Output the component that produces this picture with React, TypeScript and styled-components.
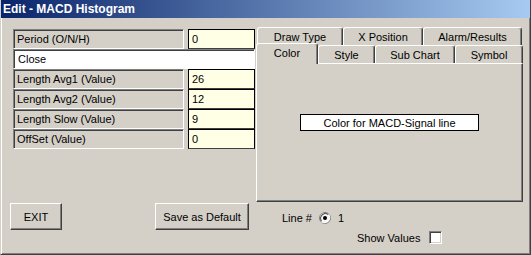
import styled, { createGlobalStyle } from 'styled-components';

const GlobalStyle = createGlobalStyle`
  body {
    margin: 0;
    font-family: 'Liberation Sans', Arial, sans-serif;
    font-size: 11px;
    color: #000;
  }
`;

const Window = styled.div`
  width: 531px;
  height: 255px;
  box-sizing: border-box;
  background: #d4d0c8;
  display: flex;
  flex-direction: column;
  border-left: 1px solid #d4d0c8;
  border-right: 1px solid #404040;
  border-bottom: 1px solid #404040;
  box-shadow: inset 1px 0 #fff, inset -1px -1px #808080;
  overflow: hidden;
`;

const TitleBar = styled.div`
  height: 18px;
  flex: none;
  display: flex;
  align-items: center;
  padding-left: 2px;
  background: linear-gradient(to right, #0a246a, #a6caf0);
  color: #fff;
  font-weight: bold;
  font-size: 12px;
`;

const Body = styled.div`
  display: flex;
  padding: 9px 0 0 9px;
`;

const LeftColumn = styled.div`
  width: 246px;
  display: flex;
  flex-direction: column;
`;

const ParamTable = styled.div`
  margin: 2px 0 0 3px;
  width: 242px;
  display: flex;
  flex-direction: column;
`;

const ParamRow = styled.div`
  height: 20px;
  display: flex;
  justify-content: space-between;
`;

const ParamLabel = styled.div`
  width: 171px;
  box-sizing: border-box;
  border: 1px solid;
  border-color: #808080 #fff #fff #808080;
  box-shadow: inset 1px 1px #404040;
  padding: 0 0 0 3px;
  display: flex;
  align-items: center;
`;

const ParamValue = styled.div`
  width: 67px;
  box-sizing: border-box;
  background: #ffffe6;
  border: 1px solid #000;
  border-bottom-color: #404040;
  padding-left: 3px;
  display: flex;
  align-items: center;
`;

const SelectField = styled.div`
  height: 20px;
  box-sizing: border-box;
  background: #fff;
  border: 1px solid;
  border-color: #808080 #fff #fff #808080;
  box-shadow: inset 1px 1px #404040;
  padding-left: 4px;
  display: flex;
  align-items: center;
`;

const ButtonRow = styled.div`
  margin-top: 54px;
  padding-right: 7px;
  display: flex;
  justify-content: space-between;
`;

const Button = styled.div<{ $w: number }>`
  width: ${(p) => p.$w}px;
  height: 27px;
  box-sizing: border-box;
  border: 1px solid;
  border-color: #fff #404040 #404040 #fff;
  box-shadow: inset -1px -1px #808080;
  display: flex;
  align-items: center;
  justify-content: center;
`;

const RightColumn = styled.div`
  width: 267px;
  display: flex;
  flex-direction: column;
`;

const TabRow = styled.div<{ $inset?: number }>`
  display: flex;
  align-items: flex-end;
  height: 18px;
  padding-left: ${(p) => p.$inset ?? 0}px;
`;

const Tab = styled.div<{ $w: number; $active?: boolean }>`
  width: ${(p) => p.$w}px;
  height: ${(p) => (p.$active ? 21 : 18)}px;
  margin-bottom: ${(p) => (p.$active ? -1 : 0)}px;
  box-sizing: border-box;
  background: #d4d0c8;
  border-top: 1px solid #fff;
  border-left: 1px solid #fff;
  border-right: 1px solid #404040;
  box-shadow: inset -1px 0 #808080;
  border-radius: 3px 3px 0 0;
  position: ${(p) => (p.$active ? 'relative' : 'static')};
  z-index: ${(p) => (p.$active ? 1 : 0)};
  display: flex;
  align-items: ${(p) => (p.$active ? 'flex-start' : 'center')};
  padding-top: ${(p) => (p.$active ? 3 : 0)}px;
  justify-content: center;
`;

const TabPanel = styled.div`
  height: 139px;
  box-sizing: border-box;
  border: 1px solid;
  border-color: #fff #404040 #404040 #fff;
  box-shadow: inset -1px -1px #808080;
  display: flex;
  justify-content: center;
  padding-top: 50px;
`;

const CaptionBox = styled.div`
  width: 179px;
  height: 17px;
  box-sizing: border-box;
  background: #fff;
  border: 1px solid #000;
  display: flex;
  align-items: center;
  justify-content: center;
`;

const OptionRow = styled.div<{ $indent: number; $top: number }>`
  display: flex;
  align-items: center;
  gap: 7px;
  height: 13px;
  margin-top: ${(p) => p.$top}px;
  padding-left: ${(p) => p.$indent}px;
`;

const CheckBox = styled.div`
  width: 13px;
  height: 13px;
  box-sizing: border-box;
  background: #fff;
  border: 1px solid;
  border-color: #808080 #fff #fff #808080;
  box-shadow: inset 1px 1px #404040, inset -1px -1px #d4d0c8;
  margin-left: 2px;
`;

const Radio = () => (
  <svg width="12" height="12" viewBox="0 0 12 12">
    <circle cx="6" cy="6" r="5.5" fill="#f4f4f4" stroke="#808080" />
    <path d="M2.5 9.5 A5 5 0 0 1 9.5 2.5" fill="none" stroke="#404040" />
    <path d="M9.8 2.2 A5.5 5.5 0 0 1 2.2 9.8" fill="none" stroke="#fff" />
    <circle cx="6" cy="6" r="2" fill="#000" />
  </svg>
);

const params = [
  { label: 'Length Avg1 (Value)', value: '26' },
  { label: 'Length Avg2 (Value)', value: '12' },
  { label: 'Length Slow (Value)', value: '9' },
  { label: 'OffSet (Value)', value: '0' },
];

const backTabs = [
  { name: 'Draw Type', w: 86 },
  { name: 'X Position', w: 80 },
  { name: 'Alarm/Results', w: 99 },
];

const frontTabs = [
  { name: 'Color', w: 62, active: true },
  { name: 'Style', w: 57 },
  { name: 'Sub Chart', w: 80 },
  { name: 'Symbol', w: 68 },
];

const App = () => (
  <>
    <GlobalStyle />
    <Window>
      <TitleBar>Edit - MACD Histogram</TitleBar>
      <Body>
        <LeftColumn>
          <ParamTable>
            <ParamRow>
              <ParamLabel>Period (O/N/H)</ParamLabel>
              <ParamValue>0</ParamValue>
            </ParamRow>
            <SelectField>Close</SelectField>
            {params.map(({ label, value }) => (
              <ParamRow key={label}>
                <ParamLabel>{label}</ParamLabel>
                <ParamValue>{value}</ParamValue>
              </ParamRow>
            ))}
          </ParamTable>
          <ButtonRow>
            <Button $w={52}>EXIT</Button>
            <Button $w={94}>Save as Default</Button>
          </ButtonRow>
        </LeftColumn>
        <RightColumn>
          <TabRow $inset={1}>
            {backTabs.map(({ name, w }) => (
              <Tab key={name} $w={w}>
                {name}
              </Tab>
            ))}
          </TabRow>
          <TabRow>
            {frontTabs.map(({ name, w, active }) => (
              <Tab key={name} $w={w} $active={active}>
                {name}
              </Tab>
            ))}
          </TabRow>
          <TabPanel>
            <CaptionBox>Color for MACD-Signal line</CaptionBox>
          </TabPanel>
          <OptionRow $indent={26} $top={9}>
            <span>Line #</span>
            <Radio />
            <span>1</span>
          </OptionRow>
          <OptionRow $indent={101} $top={7}>
            <span>Show Values</span>
            <CheckBox />
          </OptionRow>
        </RightColumn>
      </Body>
    </Window>
  </>
);

export default App;
